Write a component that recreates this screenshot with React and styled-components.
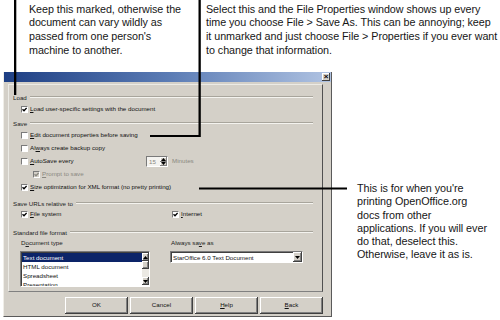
import React from 'react';
import styled, { createGlobalStyle } from 'styled-components';

const Global = createGlobalStyle`
  html, body { margin: 0; padding: 0; background: #fff; }
  body { width: 500px; height: 320px; overflow: hidden; }
`;

const Page = styled.div`
  position: relative;
  width: 500px;
  height: 320px;
  background: #fff;
  font-family: "Liberation Sans", Arial, sans-serif;
  overflow: hidden;
`;

const TopNotes = styled.div`
  display: grid;
  grid-template-columns: 206px 1fr;
  height: 72px;
  padding-top: 2.5px;
  box-sizing: border-box;
`;

const Note = styled.div`
  font-size: 10.75px;
  letter-spacing: -0.05px;
  line-height: ${p => p.$lh}px;
  color: #161616;
  white-space: nowrap;
  padding-left: ${p => p.$pl || 0}px;
  padding-top: ${p => p.$pt || 0}px;
  margin-left: ${p => p.$ml || 0}px;
`;

const Line = styled.span`
  display: block;
`;

const Body = styled.div`
  display: flex;
  align-items: flex-start;
`;

const Dialog = styled.div`
  width: 329px;
  height: 245px;
  margin-left: 3px;
  background: #d4d0c8;
  display: flex;
  flex-direction: column;
  box-sizing: border-box;
  border-left: 1px solid #f0eee8;
  border-right: 1px solid #5a5a5a;
  border-bottom: 1px solid #5a5a5a;
  font-family: "Liberation Sans", Arial, sans-serif;
  font-size: 6.2px;
  color: #111;
`;

const TitleBar = styled.div`
  height: 10px;
  background: linear-gradient(to right, #1e3f84 0%, #5a7bb4 50%, #b0c3e2 100%);
  display: flex;
  align-items: center;
  justify-content: flex-end;
  padding-right: 1px;
`;

const CloseBtn = styled.div`
  width: 8px;
  height: 8px;
  background: #d4d0c8;
  box-shadow: inset -1px -1px #404040, inset 1px 1px #fff;
  display: flex;
  align-items: center;
  justify-content: center;
  font-size: 8px;
  line-height: 1;
  font-weight: bold;
  color: #000;
`;

const Panel = styled.div`
  margin: 2px 8px 0 4px;
  height: 208px;
  box-sizing: border-box;
  border-top: 1px solid #ecebe6;
  border-left: 1px solid #ecebe6;
  border-right: 1px solid #505050;
  border-bottom: 1px solid #808080;
  padding: 0 9px 0 4px;
  display: flex;
  flex-direction: column;
`;

const GroupHeader = styled.div`
  display: flex;
  align-items: center;
  gap: 3px;
  height: 12px;
  margin-top: ${p => p.$mt || 0}px;
  color: #222;
  &::after {
    content: "";
    flex: 1;
    border-top: 1px solid #a8a59c;
    border-bottom: 1px solid #f4f3ef;
  }
`;

const Row = styled.div`
  display: flex;
  align-items: center;
  height: ${p => p.$h || 13}px;
  padding-left: ${p => p.$indent || 8}px;
`;

const Box = styled.span`
  width: 7px;
  height: 7px;
  box-sizing: border-box;
  border: 1px solid;
  border-color: #7a7a7a #fff #fff #7a7a7a;
  background: ${p => (p.$disabled ? '#d4d0c8' : '#fff')};
  display: flex;
  align-items: center;
  justify-content: center;
  flex: none;
`;

const Label = styled.span`
  margin-left: 2px;
  line-height: 1;
  white-space: nowrap;
  color: ${p => (p.$disabled ? '#8a8880' : '#111')};
  width: ${p => (p.$w ? `${p.$w}px` : 'auto')};
`;

const Check = ({ checked, disabled }) => (
  <Box $disabled={disabled}>
    {checked && (
      <svg width="5" height="5" viewBox="0 0 5 5">
        <path d="M0.5 2.3 L2 3.8 L4.6 0.9" fill="none" stroke={disabled ? '#8a8880' : '#000'} strokeWidth="1.3" />
      </svg>
    )}
  </Box>
);

const CheckRow = ({ checked, disabled, indent, children, h }) => (
  <Row $indent={indent} $h={h}>
    <Check checked={checked} disabled={disabled} />
    <Label $disabled={disabled}>{children}</Label>
  </Row>
);

const Spin = styled.div`
  width: 22px;
  height: 11px;
  box-sizing: border-box;
  border: 1px solid;
  border-color: #7a7a7a #fff #fff #7a7a7a;
  background: #f4f3f0;
  display: flex;
  align-items: center;
  color: #8a8880;
  padding-left: 2px;
`;

const SpinButtons = styled.div`
  margin-left: auto;
  width: 7px;
  height: 9px;
  display: flex;
  flex-direction: column;
`;

const SpinBtn = styled.div`
  flex: 1;
  background: #d4d0c8;
  box-shadow: inset -1px -1px #808080, inset 1px 1px #fff;
  display: flex;
  align-items: center;
  justify-content: center;
`;

const Minutes = styled.span`
  margin-left: 4px;
  color: #8a8880;
  line-height: 1;
`;

const TwoCol = styled.div`
  display: grid;
  grid-template-columns: ${p => p.$cols};
  padding-left: ${p => p.$pl}px;
`;

const Cell = styled.div`
  display: flex;
  align-items: center;
  height: ${p => p.$h || 11}px;
`;

const FormatGrid = styled.div`
  display: grid;
  grid-template-columns: 150px 133px;
  grid-template-rows: 10px 36px;
  row-gap: 3px;
  padding-left: 7px;
`;

const SmallLabel = styled.div`
  display: flex;
  align-items: center;
  padding-left: 1px;
  line-height: 1;
  color: #222;
`;

const ListBox = styled.div`
  width: 130px;
  height: 36px;
  box-sizing: border-box;
  border: 1px solid;
  border-color: #7a7a7a #fff #fff #7a7a7a;
  box-shadow: inset 1px 1px #404040;
  background: #fff;
  display: flex;
  overflow: hidden;
`;

const Items = styled.div`
  flex: 1;
  padding-top: 1px;
  padding-left: 1px;
  overflow: hidden;
`;

const Item = styled.div`
  height: 9px;
  display: flex;
  align-items: center;
  padding-left: 1px;
  background: ${p => (p.$sel ? '#0c2468' : 'transparent')};
  color: ${p => (p.$sel ? '#fff' : '#111')};
  white-space: nowrap;
`;

const ScrollBar = styled.div`
  width: 7px;
  display: flex;
  flex-direction: column;
  background: #ebe9e3;
  margin: 1px 0;
`;

const ScrollBtn = styled.div`
  height: ${p => p.$h || 8}px;
  background: #d4d0c8;
  box-shadow: inset -1px -1px #404040, inset 1px 1px #fff, inset -2px -2px #808080;
  display: flex;
  align-items: center;
  justify-content: center;
`;

const Track = styled.div`
  flex: 1;
`;

const Arrow = ({ up }) => (
  <svg width="5" height="3" viewBox="0 0 5 3">
    <path d={up ? 'M0 3 L2.5 0 L5 3 Z' : 'M0 0 L2.5 3 L5 0 Z'} fill="#000" />
  </svg>
);

const Dropdown = styled.div`
  width: 133px;
  height: 12px;
  box-sizing: border-box;
  border: 1px solid;
  border-color: #7a7a7a #fff #fff #7a7a7a;
  box-shadow: inset 1px 1px #404040;
  background: #fff;
  display: flex;
  align-items: center;
  padding-left: 2px;
  white-space: nowrap;
`;

const DropBtn = styled.div`
  margin-left: auto;
  width: 9px;
  height: 10px;
  background: #d4d0c8;
  box-shadow: inset -1px -1px #404040, inset 1px 1px #fff, inset -2px -2px #808080;
  display: flex;
  align-items: center;
  justify-content: center;
`;

const ButtonRow = styled.div`
  display: flex;
  justify-content: flex-end;
  gap: 2px;
  padding: 5px 8px 0 0;
`;

const Button = styled.div`
  width: 63px;
  height: 17px;
  background: #d4d0c8;
  box-shadow: inset -1px -1px #404040, inset 1px 1px #fff, inset -2px -2px #808080;
  display: flex;
  align-items: center;
  justify-content: center;
  line-height: 1;
  color: #111;
`;

const SideNote = styled(Note)`
  font-size: 10.8px;
`;

const Leaders = styled.svg`
  position: absolute;
  left: 0;
  top: 0;
  pointer-events: none;
`;

export default function App() {
  return (
    <Page>
      <Global />
      <TopNotes>
        <Note $lh={13.8} $pl={29}>
          <Line>Keep this marked, otherwise the</Line>
          <Line>document can vary wildly as</Line>
          <Line>passed from one person's</Line>
          <Line>machine to another.</Line>
        </Note>
        <Note $lh={13.8}>
          <Line>Select this and the File Properties window shows up every</Line>
          <Line>time you choose File &gt; Save As. This can be annoying; keep</Line>
          <Line>it unmarked and just choose File &gt; Properties if you ever want</Line>
          <Line>to change that information.</Line>
        </Note>
      </TopNotes>
      <Body>
        <Dialog>
          <TitleBar>
            <CloseBtn>×</CloseBtn>
          </TitleBar>
          <Panel>
            <GroupHeader $mt={6}>Load</GroupHeader>
            <CheckRow checked h={12}><u>L</u>oad user-specific settings with the document</CheckRow>
            <GroupHeader $mt={2}>Save</GroupHeader>
            <CheckRow><u>E</u>dit document properties before saving</CheckRow>
            <CheckRow>Al<u>w</u>ays create backup copy</CheckRow>
            <Row>
              <Check />
              <Label $w={116}><u>A</u>utoSave every</Label>
              <Spin>
                15
                <SpinButtons>
                  <SpinBtn><Arrow up /></SpinBtn>
                  <SpinBtn><Arrow /></SpinBtn>
                </SpinButtons>
              </Spin>
              <Minutes>Minutes</Minutes>
            </Row>
            <CheckRow checked disabled indent={20}><u>P</u>rompt to save</CheckRow>
            <CheckRow checked><u>S</u>ize optimization for XML format (no pretty printing)</CheckRow>
            <GroupHeader $mt={3}>Save URLs relative to</GroupHeader>
            <TwoCol $cols="151px 1fr" $pl={8}>
              <Cell>
                <Check checked />
                <Label><u>F</u>ile system</Label>
              </Cell>
              <Cell>
                <Check checked />
                <Label><u>I</u>nternet</Label>
              </Cell>
            </TwoCol>
            <GroupHeader $mt={6}>Standard file format</GroupHeader>
            <FormatGrid>
              <SmallLabel>D<u>o</u>cument type</SmallLabel>
              <SmallLabel>Always sa<u>v</u>e as</SmallLabel>
              <ListBox>
                <Items>
                  <Item $sel>Text document</Item>
                  <Item>HTML document</Item>
                  <Item>Spreadsheet</Item>
                  <Item>Presentation</Item>
                </Items>
                <ScrollBar>
                  <ScrollBtn><Arrow up /></ScrollBtn>
                  <ScrollBtn $h={8} />
                  <Track />
                  <ScrollBtn><Arrow /></ScrollBtn>
                </ScrollBar>
              </ListBox>
              <div>
                <Dropdown>
                  StarOffice 6.0 Text Document
                  <DropBtn><Arrow /></DropBtn>
                </Dropdown>
              </div>
            </FormatGrid>
          </Panel>
          <ButtonRow>
            <Button>OK</Button>
            <Button>Cancel</Button>
            <Button><u>H</u>elp</Button>
            <Button><u>B</u>ack</Button>
          </ButtonRow>
        </Dialog>
        <SideNote $lh={13.3} $ml={25} $pt={110}>
          <Line>This is for when you're</Line>
          <Line>printing OpenOffice.org</Line>
          <Line>docs from other</Line>
          <Line>applications. If you will ever</Line>
          <Line>do that, deselect this.</Line>
          <Line>Otherwise, leave it as is.</Line>
        </SideNote>
      </Body>
      <Leaders width="500" height="320" viewBox="0 0 500 320">
        <rect x="14" y="0" width="2.3" height="95" fill="#000" />
        <rect x="198.5" y="0" width="2.3" height="137" fill="#000" />
        <rect x="150" y="135" width="50" height="2" fill="#000" />
        <rect x="199" y="187.5" width="148" height="2" fill="#000" />
      </Leaders>
    </Page>
  );
}
